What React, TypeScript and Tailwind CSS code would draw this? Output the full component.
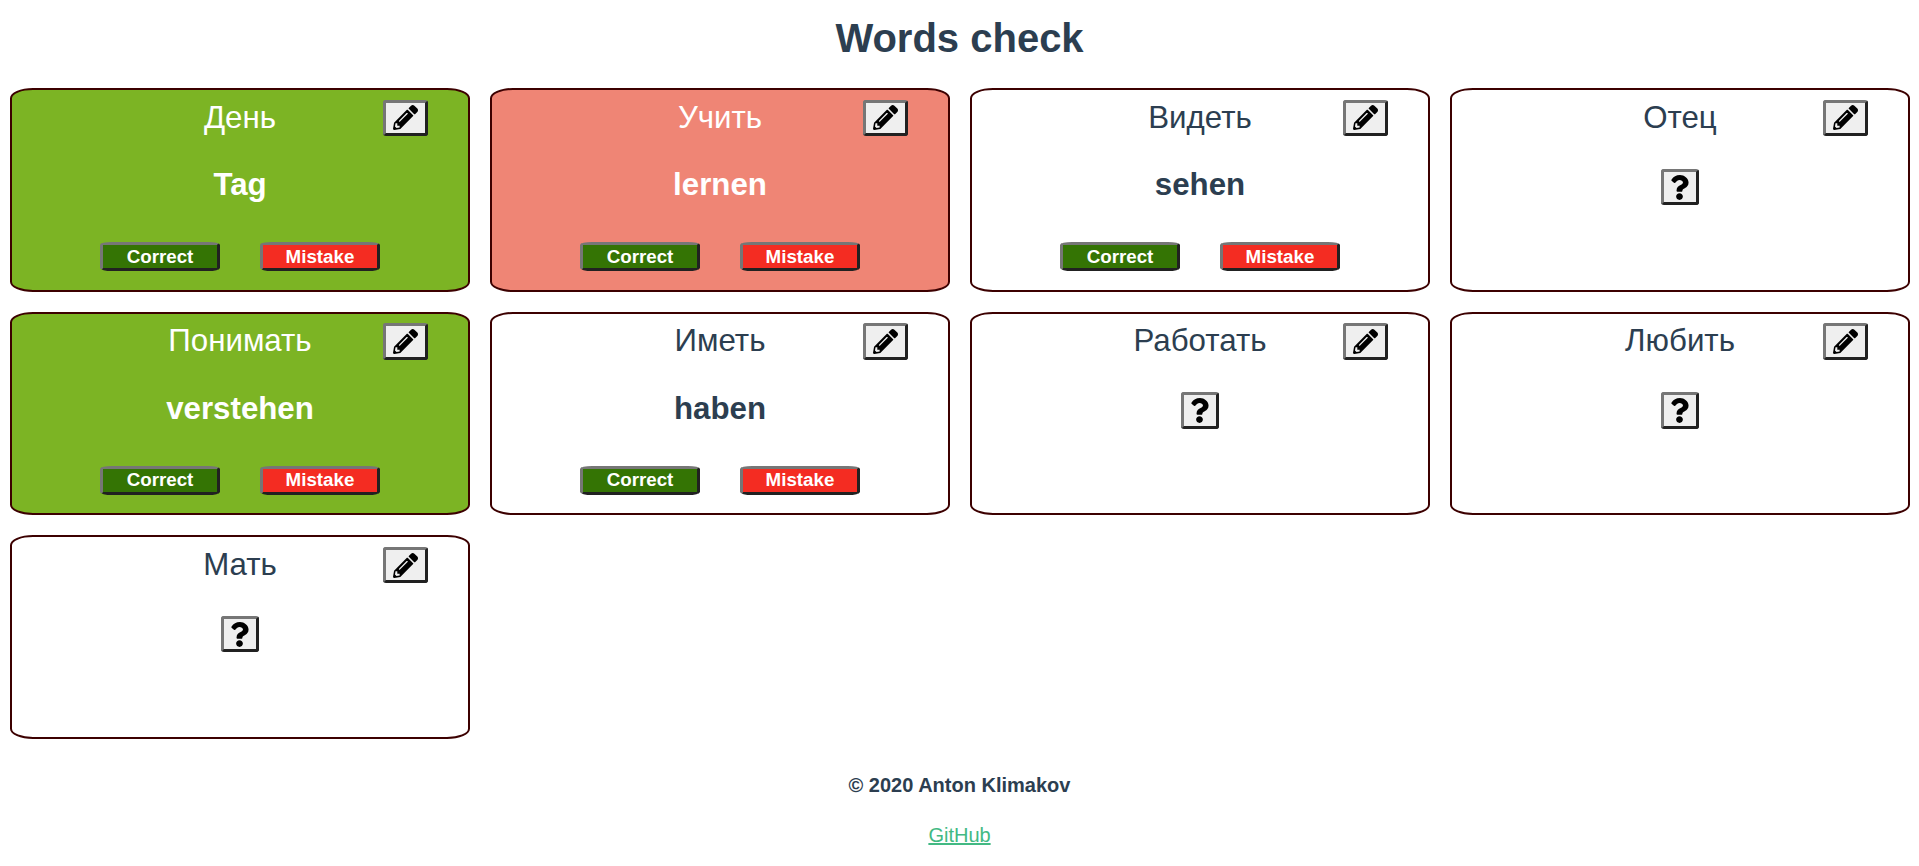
import { FaPencilAlt, FaQuestion } from "react-icons/fa";

type Word = {
  word: string;
  translation?: string;
  status?: "correct" | "mistake";
};

const words: Word[] = [
  { word: "День", translation: "Tag", status: "correct" },
  { word: "Учить", translation: "lernen", status: "mistake" },
  { word: "Видеть", translation: "sehen" },
  { word: "Отец" },
  { word: "Понимать", translation: "verstehen", status: "correct" },
  { word: "Иметь", translation: "haben" },
  { word: "Работать" },
  { word: "Любить" },
  { word: "Мать" },
];

const tone = {
  correct: "bg-[#7cb424] text-white",
  mistake: "bg-[#ef8575] text-white",
  none: "bg-white text-[#2c3e50]",
};

const bevel =
  "flex items-center justify-center border-[3px] border-t-[#767676] border-l-[#767676] border-r-[#212121] border-b-[#212121]";

function Card({ word, translation, status }: Word) {
  return (
    <article
      className={`relative flex h-[203.55px] flex-col items-center rounded-[5%] border-2 border-[#3c0000] ${tone[status ?? "none"]}`}
    >
      <h2 className="mt-[8.7px] text-[31.25px] leading-[37px]">{word}</h2>
      <button
        aria-label="Edit"
        className={`absolute top-[9.7px] right-[40px] h-[36.3px] w-[45px] rounded-[3px] bg-[#efefef] text-black ${bevel}`}
      >
        <FaPencilAlt size={25} />
      </button>
      {translation ? (
        <>
          <p className="mt-[30.3px] text-[31.25px] leading-[37px] font-bold">{translation}</p>
          <div className="mt-[39px] flex gap-10 text-[18.75px] leading-[20px] font-bold text-white">
            <button className={`h-[29px] w-[120px] rounded-[10%] bg-[#347404] ${bevel}`}>Correct</button>
            <button className={`h-[29px] w-[120px] rounded-[10%] bg-[#f42c22] ${bevel}`}>Mistake</button>
          </div>
        </>
      ) : (
        <button
          aria-label="Show translation"
          className={`mt-[33.1px] h-[36.5px] w-[38px] rounded-[3px] bg-[#efefef] pr-px text-black ${bevel}`}
        >
          <FaQuestion size={25} />
        </button>
      )}
    </article>
  );
}

export default function App() {
  return (
    <div className="min-h-screen overflow-hidden bg-white text-center font-['Liberation_Sans',Arial,sans-serif] text-[#2c3e50]">
      <h1 className="pt-[15px] text-[40px] leading-[46px] font-bold">Words check</h1>
      <main className="mt-[27.1px] grid grid-cols-[repeat(4,460px)] gap-5 pl-[10px]">
        {words.map((item) => (
          <Card key={item.word} {...item} />
        ))}
      </main>
      <footer className="mt-[34px] text-[20px] leading-[24px]">
        <p className="font-bold">© 2020 Anton Klimakov</p>
        <a href="#" className="mt-[26px] inline-block text-[#42b983] underline">
          GitHub
        </a>
      </footer>
    </div>
  );
}
